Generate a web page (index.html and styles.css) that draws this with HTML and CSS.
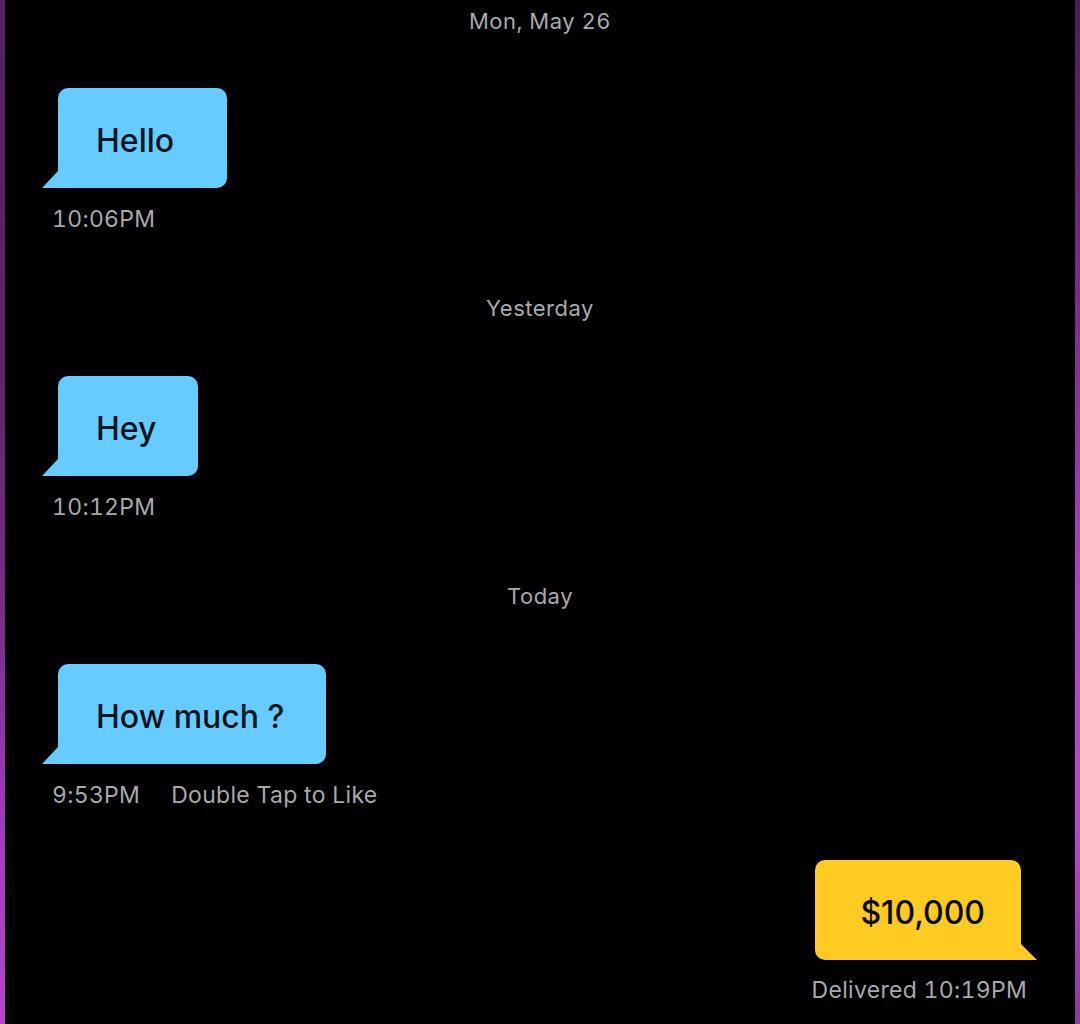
FILE: index.html
```html
<!DOCTYPE html>
<html lang="en">
<head>
<meta charset="utf-8">
<title>Chat</title>
<link rel="stylesheet" href="styles.css">
</head>
<body>
<div class="screen">
  <div class="edge edge-left"></div>
  <main class="chat">
    <div class="day first">Mon, May 26</div>
    <div class="msg in">
      <div class="bubble roomy">Hello</div>
      <div class="meta">10:06PM</div>
    </div>

    <div class="day">Yesterday</div>
    <div class="msg in">
      <div class="bubble">Hey</div>
      <div class="meta">10:12PM</div>
    </div>

    <div class="day">Today</div>
    <div class="msg in">
      <div class="bubble">How much ?</div>
      <div class="meta"><span>9:53PM</span><span>Double Tap to Like</span></div>
    </div>

    <div class="msg out">
      <div class="bubble">$10,000</div>
      <div class="meta">Delivered 10:19PM</div>
    </div>
  </main>
  <div class="edge edge-right"></div>
</div>
</body>
</html>
```

FILE: styles.css
```css
* { box-sizing: border-box; }

html, body {
  margin: 0;
  padding: 0;
  background: #000;
}

body {
  font-family: Inter, "Noto Sans", "Liberation Sans", sans-serif;
}

.screen {
  display: flex;
  width: 1080px;
  height: 1024px;
  overflow: hidden;
  background: #000;
}

.edge {
  width: 5px;
  flex: none;
}

.edge-left {
  background: linear-gradient(to bottom, #55215f 0%, #5e2468 35%, #7a2c8c 60%, #a23bb8 80%, #b843d0 100%);
}

.edge-right {
  background: linear-gradient(to bottom, #4a1f55 0%, #6a2876 20%, #8e339f 40%, #b443cc 60%, #b946d1 80%, #8c3a9c 100%);
}

.chat {
  flex: 1;
  display: flex;
  flex-direction: column;
  padding-top: 6px;
}

.day {
  text-align: center;
  font-size: 22px;
  line-height: 30px;
  color: #a9a9af;
  margin: 59px 0 53px;
  letter-spacing: 0.5px;
  font-variant-numeric: tabular-nums;
}

.day.first {
  margin-top: 0;
  margin-bottom: 52px;
}

.msg {
  display: flex;
  flex-direction: column;
}

.msg.in {
  align-self: flex-start;
  align-items: flex-start;
  margin-left: 53px;
}

.msg.out {
  align-self: flex-end;
  align-items: flex-end;
  margin-right: 54px;
  margin-top: 50px;
}

.bubble {
  position: relative;
  height: 100px;
  font-size: 32px;
  font-weight: 500;
  line-height: 94px;
  padding-top: 6px;
  white-space: nowrap;
}

.in .bubble {
  background: #66ccff;
  color: #08141d;
  padding-left: 38px;
  padding-right: 42px;
  border-radius: 10px 10px 10px 0;
}

.in .bubble.roomy {
  padding-right: 53px;
}

.out .bubble {
  background: #ffcb22;
  color: #0a0a0a;
  padding-left: 45px;
  padding-right: 36px;
  border-radius: 10px 10px 0 10px;
}

.in .bubble::before {
  content: "";
  position: absolute;
  left: -16px;
  bottom: 0;
  width: 16px;
  height: 17px;
  background: #66ccff;
  clip-path: polygon(100% 0, 100% 100%, 0 100%);
}

.out .bubble::after {
  content: "";
  position: absolute;
  right: -16px;
  bottom: 0;
  width: 16px;
  height: 16px;
  background: #ffcb22;
  clip-path: polygon(0 0, 100% 100%, 0 100%);
}

.meta {
  display: flex;
  gap: 31px;
  font-size: 23px;
  line-height: 30px;
  color: #a8a8ae;
  letter-spacing: 0.3px;
  margin-top: 16px;
  white-space: nowrap;
  font-variant-numeric: tabular-nums;
}

.in .meta {
  margin-left: -6px;
}

.out .meta {
  margin-top: 15px;
  margin-right: -6px;
}
```
